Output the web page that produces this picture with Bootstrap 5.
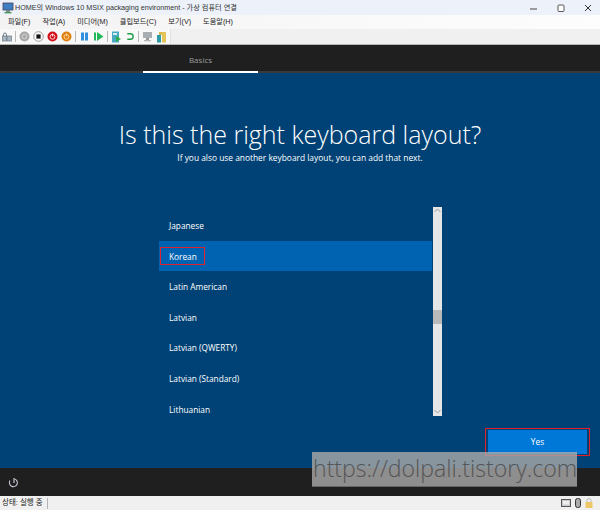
<!DOCTYPE html>
<html lang="ko"><head><meta charset="utf-8">
<link href="https://cdn.jsdelivr.net/npm/bootstrap@5.3.0/dist/css/bootstrap.min.css" rel="stylesheet">
<style>
html,body{width:600px;height:510px;overflow:hidden;margin:0}
body{font-family:"Open Sans","Noto Sans CJK KR",sans-serif;background:#f0f0f0;position:relative}
.win-title{height:15px;background:#edf2fa;font-size:7.2px;color:#333;padding-left:2px;gap:1px;line-height:15px;font-family:"Liberation Sans","Noto Sans CJK KR",sans-serif}
.win-ctl{margin-left:auto;gap:17px;padding-right:7px}
.win-menu{height:14px;background:linear-gradient(90deg,#f3f3f3,#fdfdfd);font-size:7.2px;color:#222;padding-left:8px;gap:12px;line-height:14px;font-family:"Liberation Sans","Noto Sans CJK KR",sans-serif}
.win-tools{height:16px;background:#f0f0f0;border-bottom:1px solid #b5b5b5;}
.tool-inner{background:#f8f8f8;height:15px;width:171px;padding-left:2px;gap:3px;border-right:1px solid #e0e0e0}
.tool-sep{width:1px;height:11px;background:#b8b8b8}
.oobe-top{height:28px;background:#1f1f1f;border-bottom:2px solid #3a3a3a;position:relative}
.oobe-tab{position:absolute;left:143px;width:115px;top:0;height:28px;border-bottom:2px solid #fff;color:#9c9c9c;font-size:8px;text-align:center;line-height:29px}
.oobe-main{height:395px;background:#004275;color:#fff}
.oobe-h{font-weight:300;font-size:25px;line-height:30px;padding-top:46px;text-align:center;margin:0;color:#fff}
.oobe-sub{font-size:8.4px;text-align:center;line-height:12px;margin:3px 0 0}
.kb-wrap{margin:43px 0 0 159px;width:283px;height:209px}
.kb-list{width:273px;padding-top:3px;font-size:8.3px}
.kb-row{height:30.6px;padding-left:10px;line-height:32px;position:relative}
.kb-sel{background:#0063b1}
.kb-mark{position:absolute;left:1px;top:6px;width:45px;height:18px;border:1px solid #e0222e}
.kb-bar{width:9px;background:#e6e6e6;height:209px}
.kb-arrow{height:8px;padding-top:1px}
.kb-track1{height:95px}
.kb-thumb{height:14px;background:#b9b9b9}
.yes-row{padding:12px 10px 0 0}
.yes-box{border:1px solid #e0222e;padding:1px 2px;width:105px;height:28px}
.yes-btn{width:100%;height:100%;background:#0078d7;color:#fff;font-size:8.3px;line-height:24px;text-align:center;border:0;padding:0;border-radius:0;display:block}
.oobe-bot{height:28px;background:#1f1f1f;padding-left:8px}
.win-status{height:14px;background:#f0f0f0;font-size:7.5px;color:#222;line-height:14px;padding-left:2px;font-family:"Liberation Sans","Noto Sans CJK KR",sans-serif}
.st-div{width:1px;height:11px;background:#b5b5b5;margin-left:4px}
.st-icons{margin-left:auto;gap:4px;padding-right:7px}
.wm{position:absolute;left:312px;top:452px;width:265px;height:35px;background:rgba(170,170,170,.8);border-bottom:1px solid #666;color:#555;font-family:"Open Sans",sans-serif;font-weight:300;font-size:23.1px;line-height:33px;white-space:nowrap;padding-left:1px}
</style></head><body>
<div class="win-title d-flex align-items-center">
<svg width="12" height="12" viewBox="0 0 12 12"><rect x="1" y="1" width="10" height="7" fill="#3f7fc4" stroke="#445" stroke-width=".8"/><rect x="4" y="8" width="4" height="2" fill="#7a8a94"/><rect x="2.5" y="10" width="7" height="1.4" fill="#4b9a55"/></svg>
<span>HOME의 Windows 10 MSIX packaging environment - 가상 컴퓨터 연결</span>
<div class="win-ctl d-flex align-items-center">
<svg width="10" height="10" viewBox="0 0 10 10"><path d="M1 6h7" stroke="#444" fill="none"/></svg>
<svg width="10" height="10" viewBox="0 0 10 10"><rect x="2" y="2" width="6" height="6.5" rx="1" fill="#fff" stroke="#555"/></svg>
<svg width="10" height="10" viewBox="0 0 10 10"><path d="M2 2l6 6M8 2l-6 6" stroke="#333" fill="none"/></svg>
</div></div>
<div class="win-menu d-flex"><span>파일(F)</span><span>작업(A)</span><span>미디어(M)</span><span>클립보드(C)</span><span>보기(V)</span><span>도움말(H)</span></div>
<div class="win-tools"><div class="tool-inner d-flex align-items-center">
<svg width="10" height="10" viewBox="0 0 10 10"><rect x=".5" y="4" width="4" height="5" fill="#a9b6c4" stroke="#6b7785" stroke-width=".7"/><rect x="5" y="4" width="4.5" height="5" fill="#a9b6c4" stroke="#6b7785" stroke-width=".7"/><path d="M1.5 4V2.5a1.5 1.5 0 0 1 3 0V4" stroke="#6b7785" fill="none"/></svg>
<i class="tool-sep"></i>
<svg width="11" height="11" viewBox="0 0 11 11"><circle cx="5.5" cy="5.5" r="5" fill="#a8a8a8"/><circle cx="5.5" cy="5.5" r="2.3" fill="none" stroke="#ddd" stroke-width=".8"/></svg>
<svg width="11" height="11" viewBox="0 0 11 11"><circle cx="5.5" cy="5.5" r="4.8" fill="#fafafa" stroke="#777" stroke-width=".7"/><rect x="3.4" y="3.4" width="4.2" height="4.2" fill="#111"/></svg>
<svg width="11" height="11" viewBox="0 0 11 11"><circle cx="5.5" cy="5.5" r="5" fill="#d4111b"/><circle cx="5.5" cy="5.8" r="2.4" fill="none" stroke="#fff" stroke-width=".8"/><path d="M5.5 2.5v3" stroke="#fff" stroke-width=".8"/></svg>
<svg width="11" height="11" viewBox="0 0 11 11"><circle cx="5.5" cy="5.5" r="5" fill="#e0800f"/><circle cx="5.5" cy="5.8" r="2.4" fill="none" stroke="#ffe2b0" stroke-width=".8"/><path d="M5.5 2.5v3" stroke="#ffe2b0" stroke-width=".8"/></svg>
<i class="tool-sep"></i>
<svg width="11" height="11" viewBox="0 0 11 11"><rect x="2" y="1.5" width="3" height="8" fill="#2f8fe0"/><rect x="6" y="1.5" width="3" height="8" fill="#2f8fe0"/></svg>
<svg width="11" height="11" viewBox="0 0 11 11"><rect x="1" y="1.5" width="2" height="8" fill="#23b85a"/><path d="M4 1l6.5 4.5L4 10z" fill="#23b85a"/></svg>
<i class="tool-sep"></i>
<svg width="11" height="12" viewBox="0 0 11 12"><rect x="1" y="0.5" width="7" height="11" fill="#48a9c4"/><rect x="2" y="2" width="4" height="2" fill="#d4eef5"/><path d="M5 5l5 3-5 3z" fill="#2fae4e"/></svg>
<svg width="10" height="11" viewBox="0 0 11 11"><path d="M2.5 2.5H6a3 3 0 0 1 0 6H2.5" fill="none" stroke="#1f9e47" stroke-width="1.5"/></svg>
<i class="tool-sep"></i>
<svg width="11" height="11" viewBox="0 0 11 11"><rect x="1" y="1" width="9" height="6" fill="#a9aeb2"/><rect x="4" y="7" width="3" height="2" fill="#999"/><rect x="2" y="9" width="7" height="1.3" fill="#b5b5b5"/></svg>
<svg width="11" height="12" viewBox="0 0 11 12"><rect x="1" y="4" width="4" height="7.5" fill="#2f9aa8"/><rect x="6" y="1" width="4" height="10.5" fill="#e4c35a"/><rect x="3" y="1" width="3" height="3" fill="#d8b94e"/></svg>
</div></div>
<div class="oobe-top"><div class="oobe-tab">Basics</div></div>
<main class="oobe-main d-flex flex-column">
<h1 class="oobe-h">Is this the right keyboard layout?</h1>
<p class="oobe-sub">If you also use another keyboard layout, you can add that next.</p>
<div class="kb-wrap d-flex">
<div class="kb-list">
<div class="kb-row">Japanese</div>
<div class="kb-row kb-sel">Korean<span class="kb-mark"></span></div>
<div class="kb-row">Latin American</div>
<div class="kb-row">Latvian</div>
<div class="kb-row">Latvian (QWERTY)</div>
<div class="kb-row">Latvian (Standard)</div>
<div class="kb-row">Lithuanian</div>
</div>
<div class="kb-bar ms-auto d-flex flex-column">
<div class="kb-arrow d-flex justify-content-center"><svg width="7" height="5" viewBox="0 0 7 5"><path d="M.5 4l3-3 3 3" fill="none" stroke="#999"/></svg></div>
<div class="kb-track1"></div>
<div class="kb-thumb"></div>
<div class="flex-grow-1"></div>
<div class="kb-arrow d-flex justify-content-center"><svg width="7" height="5" viewBox="0 0 7 5"><path d="M.5 1l3 3 3-3" fill="none" stroke="#999"/></svg></div>
</div></div>
<div class="yes-row d-flex justify-content-end"><div class="yes-box"><button class="btn yes-btn">Yes</button></div></div>
</main>
<div class="oobe-bot d-flex align-items-center">
<svg width="11" height="11" viewBox="0 0 11 11"><path d="M3 2.5a4 4 0 1 0 5 0" transform="rotate(-20 5.5 6)" fill="none" stroke="#d9d3e8"/><path d="M6 1v5" stroke="#e8e2f0"/></svg>
</div>
<div class="win-status d-flex align-items-center"><span>상태: 실행 중</span><i class="st-div"></i>
<div class="st-icons d-flex align-items-center">
<svg width="10" height="8" viewBox="0 0 10 8"><rect x=".5" y=".5" width="9" height="7" fill="#c9ced3" stroke="#555"/><rect x="2" y="2" width="6" height="3.5" fill="#eee"/></svg>
<svg width="6" height="10" viewBox="0 0 6 10"><rect x=".5" y=".5" width="5" height="9" rx="2" fill="#aaa" stroke="#333"/></svg>
<svg width="8" height="10" viewBox="0 0 8 10"><rect x=".5" y="4" width="7" height="6" fill="#eec766"/><path d="M2 4V2.5a2 2 0 0 1 4 0V4" fill="none" stroke="#b9b9b9"/></svg>
</div></div>
<div class="wm">https://dolpali.tistory.com</div>
</body></html>
